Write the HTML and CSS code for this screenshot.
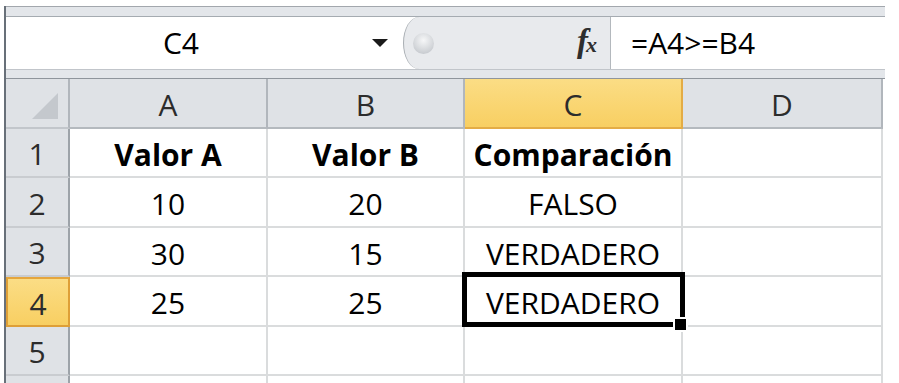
FILE: index.html
```html
<!DOCTYPE html>
<html lang="es">
<head>
    <meta charset="UTF-8">
    <title>Comparación</title>
    <link rel="stylesheet" href="styles.css">
</head>
<body>
    <div class="excel">
        <div class="fbar">
            <div class="fbarInner">
                <div class="nameBox">
                    <span class="name">C4</span>
                    <svg class="arrow" width="16" height="8" viewBox="0 0 16 8"><path d="M0 0 H16 L8 8 Z" fill="#1a1a1a"/></svg>
                </div>
                <div class="fMid">
                    <span class="knob"></span>
                    <span class="fx">f<i>x</i></span>
                </div>
                <div class="fInput">=A4&gt;=B4</div>
            </div>
        </div>

        <div class="sheet">
            <div class="hd corner">
                <svg class="tri" width="26" height="26" viewBox="0 0 26 26"><path d="M26 0 V26 H0 Z" fill="#c4c8cd"/></svg>
            </div>
            <div class="hd col">A</div>
            <div class="hd col">B</div>
            <div class="hd col sel">C</div>
            <div class="hd col">D</div>

            <div class="hd row">1</div>
            <div class="cell bold">Valor A</div>
            <div class="cell bold">Valor B</div>
            <div class="cell bold">Comparación</div>
            <div class="cell"></div>

            <div class="hd row">2</div>
            <div class="cell">10</div>
            <div class="cell">20</div>
            <div class="cell">FALSO</div>
            <div class="cell"></div>

            <div class="hd row">3</div>
            <div class="cell">30</div>
            <div class="cell">15</div>
            <div class="cell">VERDADERO</div>
            <div class="cell"></div>

            <div class="hd row sel">4</div>
            <div class="cell">25</div>
            <div class="cell">25</div>
            <div class="cell active">VERDADERO<span class="selBox"></span><span class="handle"></span></div>
            <div class="cell"></div>

            <div class="hd row">5</div>
            <div class="cell"></div>
            <div class="cell"></div>
            <div class="cell"></div>
            <div class="cell"></div>

            <div class="hd row"></div>
            <div class="cell"></div>
            <div class="cell"></div>
            <div class="cell"></div>
            <div class="cell"></div>
        </div>
    </div>
</body>
</html>
```

FILE: styles.css
```css
* {
    box-sizing: border-box;
    margin: 0;
    padding: 0;
}
body {
    background: #fff;
    font-family: "Open Sans", "Noto Sans", sans-serif;
    font-size: 30px;
    color: #000;
}
.excel {
    margin: 6px 0 0 4px;
    width: 881px;
    height: 377px;
    overflow: hidden;
    border-left: 2px solid #687079;
}

/* formula bar */
.fbar {
    height: 73px;
    background: #e3e6ea;
    border-top: 1px solid #a2a7ad;
    border-bottom: 1px solid #8f959c;
    padding: 9px 0 8px;
}
.fbarInner {
    display: flex;
    height: 54px;
    border-top: 1px solid #a5abb1;
    border-bottom: 1px solid #c1c5ca;
}
.nameBox {
    flex: 0 0 412px;
    display: flex;
    align-items: center;
    background: #fff;
}
.nameBox .name {
    width: 350px;
    text-align: center;
    line-height: 1;
}
.nameBox .arrow {
    margin-left: auto;
    margin-right: 30px;
}
.fMid {
    flex: 0 0 208px;
    margin-left: -15px;
    display: flex;
    align-items: center;
    background: #e8eaed;
    border-left: 1px solid #a9aeb3;
    border-right: 1px solid #b3b8bd;
    border-radius: 16px 0 0 16px / 26px 0 0 26px;
}
.knob {
    width: 21px;
    height: 21px;
    margin-left: 9px;
    border-radius: 50%;
    background: radial-gradient(circle at 50% 35%, #f6f7f8 0%, #d0d3d7 65%, #b9bdc2 100%);
}
.fx {
    margin: 0 15px 4px auto;
    font-family: "Liberation Serif", serif;
    font-style: italic;
    font-weight: bold;
    font-size: 33px;
    color: #2e2e2e;
    letter-spacing: -2px;
}
.fx i {
    font-size: 22px;
}
.fInput {
    flex: 1;
    background: #fff;
    display: flex;
    align-items: center;
    padding-left: 20px;
    line-height: 1;
}

/* sheet */
.sheet {
    display: grid;
    grid-template-columns: 64px 198px 197px 218px 200px;
    grid-template-rows: 50px 49px 50px 49px 50px 49px 50px;
}
.hd {
    display: flex;
    align-items: center;
    justify-content: center;
    padding-top: 2px;
    background: #dfe2e6;
    color: #2c2c2c;
    border-right: 2px solid #b1b6bc;
    border-bottom: 2px solid #c2c6cb;
}
.hd.col {
    border-bottom-color: #b4b9be;
}
.hd.row {
    border-right-color: #9da3a9;
    border-bottom-color: #c9ccd0;
}
.hd.sel {
    background: linear-gradient(#fbdd85, #f8cf62);
    border-color: #e4ac45;
}
.hd.row.sel {
    border: 2px solid #de9f37;
    border-top-color: #e5a63d;
}
.corner {
    justify-content: flex-end;
    align-items: flex-end;
    padding: 0 10px 8px 0;
}
.cell {
    display: flex;
    align-items: center;
    justify-content: center;
    padding-top: 3px;
    border-right: 2px solid #dadcdd;
    border-bottom: 2px solid #dadcdd;
    white-space: nowrap;
}
.cell.bold {
    font-weight: bold;
}
.cell.active {
    position: relative;
}
.selBox {
    position: absolute;
    left: -3px;
    top: -5px;
    right: -4px;
    bottom: -2px;
    border: 5px solid #000;
}
.handle {
    position: absolute;
    right: -7px;
    bottom: -7px;
    width: 15px;
    height: 15px;
    background: #000;
    border: 2px solid #fff;
}
```
